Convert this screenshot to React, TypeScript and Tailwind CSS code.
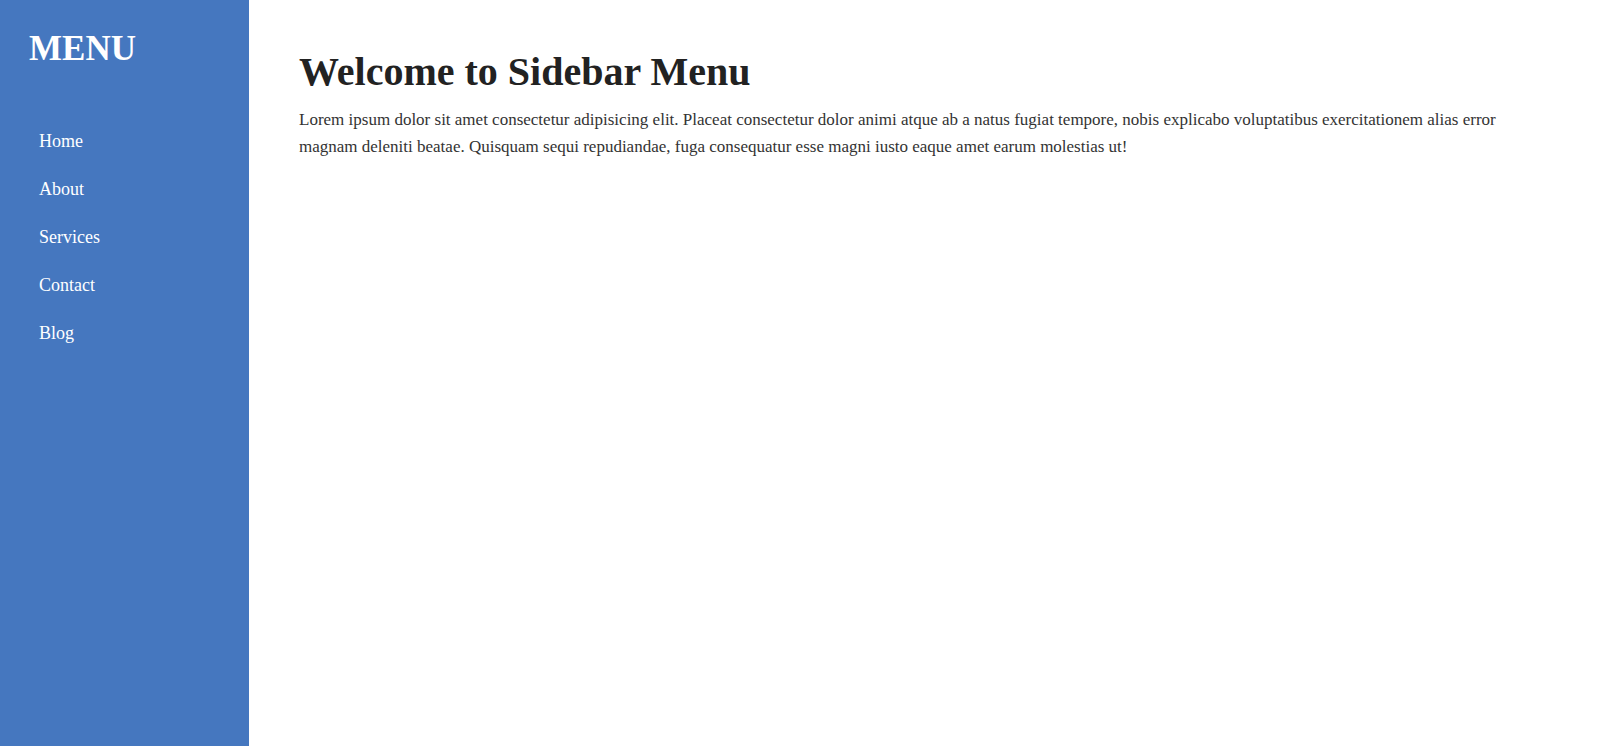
export default function App() {
  const items = ["Home", "About", "Services", "Contact", "Blog"];
  return (
    <div className="flex min-h-[746px] font-['Liberation_Serif',serif] bg-white">
      <aside className="w-[249px] shrink-0 bg-[#4577bf] px-[29px] pt-[25px] text-white">
        <h2 className="text-[35px] font-bold leading-[48px]">MENU</h2>
        <ul className="mt-[44px] flex flex-col">
          {items.map((item) => (
            <li key={item} className="px-[10px] text-[18px] leading-[48px]">
              {item}
            </li>
          ))}
        </ul>
      </aside>
      <main className="flex-1 px-[50px] pt-[44px] text-[#222]">
        <h1 className="text-[40px] font-bold leading-[56px]">Welcome to Sidebar Menu</h1>
        <p className="mt-[6px] text-[17px] leading-[27px] text-[#333]">
          Lorem ipsum dolor sit amet consectetur adipisicing elit. Placeat consectetur dolor animi atque ab a
          natus fugiat tempore, nobis explicabo voluptatibus exercitationem alias error magnam deleniti beatae.
          Quisquam sequi repudiandae, fuga consequatur esse magni iusto eaque amet earum molestias ut!
        </p>
      </main>
    </div>
  );
}
